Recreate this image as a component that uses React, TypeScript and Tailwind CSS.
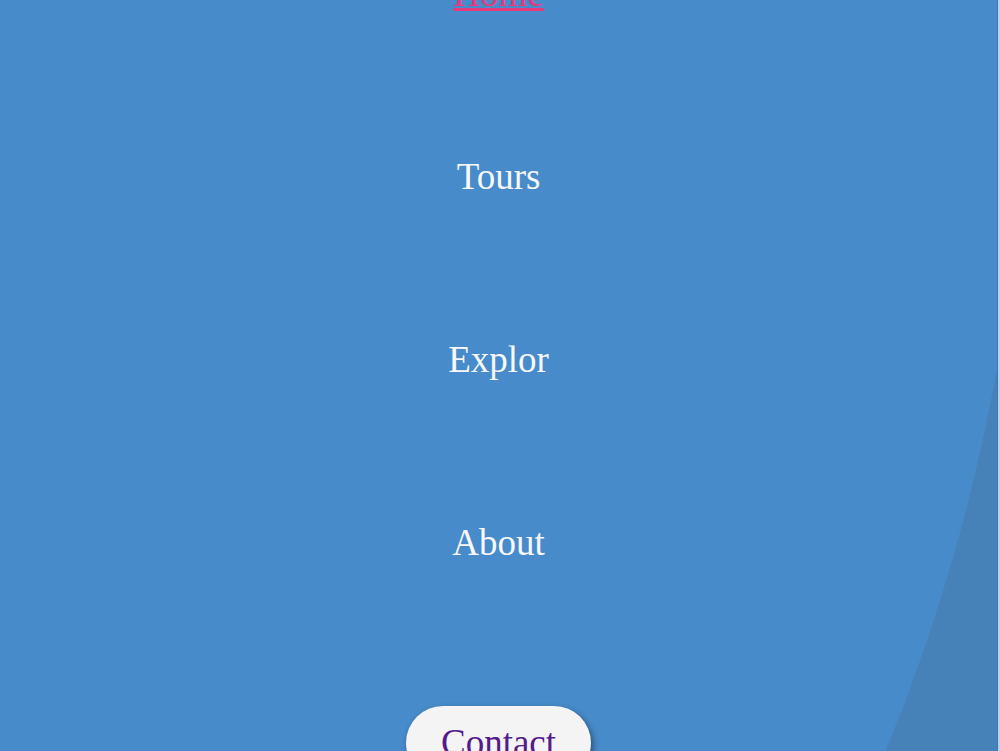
export default function App() {
  const links = ["Tours", "Explor", "About"];

  return (
    <div className="flex h-[751px] w-full overflow-hidden bg-[#4682b8] font-['Liberation_Serif',serif]">
      {/* Menu panel, revealed as a big ellipse from the top-left */}
      <nav className="flex-1 bg-[#478bca] [clip-path:ellipse(1030px_1470px_at_0_0)]">
        <ul className="-mt-[26px] flex flex-col items-center gap-[143px] text-[37px] leading-[40px]">
          <li>
            <a href="#" className="text-[#e8397b] underline">
              Home
            </a>
          </li>
          {links.map((link) => (
            <li key={link}>
              <a href="#" className="text-[#f7f7f7]">
                {link}
              </a>
            </li>
          ))}
          <li>
            <a
              href="#"
              className="block rounded-full bg-[#f4f4f4] px-[35px] py-[17px] text-[#551a8b] shadow-[2px_3px_6px_rgba(0,0,0,0.45)]"
            >
              Contact
            </a>
          </li>
        </ul>
      </nav>

      {/* Right edge strip */}
      <div className="w-[3px] border-l border-[#3f78ad] bg-[#b3d3f3]" />
    </div>
  );
}
